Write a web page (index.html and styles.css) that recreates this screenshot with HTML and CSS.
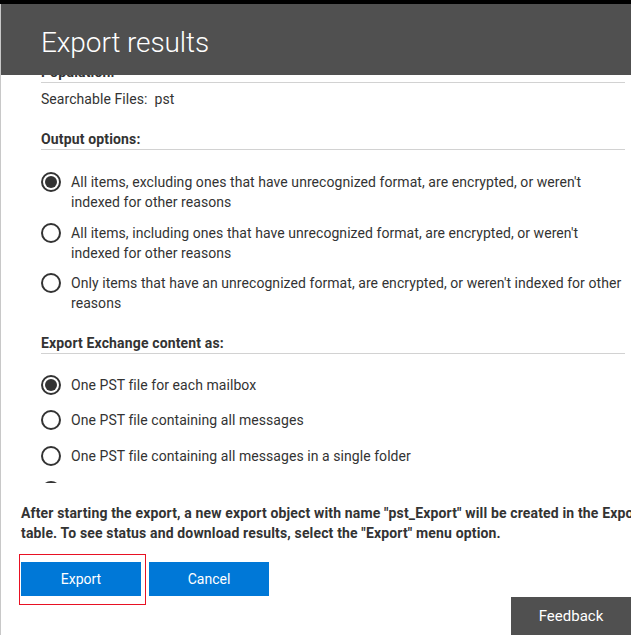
FILE: index.html
```html
<!DOCTYPE html>
<html lang="en">
<head>
<meta charset="utf-8">
<title>Export results</title>
<link rel="stylesheet" href="styles.css">
</head>
<body>
<div class="topband"></div>
<div class="dialog">
  <header class="dlg-header">
    <h1 class="dlg-title">Export results</h1>
  </header>
  <div class="dlg-body">
    <div class="scroll">
      <h2 class="sect">Population:</h2>
      <p class="info">Searchable Files:&nbsp; pst</p>

      <h2 class="sect sect-gap">Output options:</h2>
      <div class="opts opts-multi">
        <label class="opt"><span class="radio on"></span><span class="opt-text">All items, excluding ones that have unrecognized format, are encrypted, or weren't indexed for other reasons</span></label>
        <label class="opt"><span class="radio"></span><span class="opt-text">All items, including ones that have unrecognized format, are encrypted, or weren't indexed for other reasons</span></label>
        <label class="opt"><span class="radio"></span><span class="opt-text">Only items that have an unrecognized format, are encrypted, or weren't indexed for other reasons</span></label>
      </div>

      <h2 class="sect sect-gap">Export Exchange content as:</h2>
      <div class="opts opts-single">
        <label class="opt"><span class="radio on"></span><span class="opt-text">One PST file for each mailbox</span></label>
        <label class="opt"><span class="radio"></span><span class="opt-text">One PST file containing all messages</span></label>
        <label class="opt"><span class="radio"></span><span class="opt-text">One PST file containing all messages in a single folder</span></label>
        <label class="opt"><span class="radio"></span><span class="opt-text">One PST file for each message</span></label>
      </div>
    </div>
  </div>
  <footer class="dlg-footer">
    <p class="note">After starting the export, a new export object with name "pst_Export" will be created in the Export<br>table. To see status and download results, select the "Export" menu option.</p>
    <div class="actions">
      <span class="highlight"><button class="btn" type="button">Export</button></span>
      <button class="btn" type="button">Cancel</button>
    </div>
  </footer>
</div>
<button class="feedback" type="button">Feedback</button>
</body>
</html>
```
FILE: styles.css
```css
html, body {
  margin: 0;
  height: 100%;
  overflow: hidden;
  background: #ffffff;
}

body {
  font-family: Roboto, "Segoe UI", "Liberation Sans", sans-serif;
  font-size: 14px;
  letter-spacing: 0.06px;
  color: #333333;
}

.topband {
  height: 4px;
  background: #000000;
}

.dialog {
  height: 631px;
  border-left: 1px solid #c8c8c8;
  display: flex;
  flex-direction: column;
}

.dlg-header {
  flex: none;
  height: 71px;
  box-sizing: border-box;
  background: #505050;
  padding: 22px 0 0 40px;
}

.dlg-title {
  margin: 0;
  font-size: 28px;
  font-weight: 300;
  line-height: 34px;
  letter-spacing: -0.1px;
  color: #ffffff;
}

.dlg-body {
  flex: 1;
  min-height: 0;
  overflow: hidden;
}

.scroll {
  margin-top: -13px;
  padding: 0 6px 0 40px;
}

.sect {
  margin: 0;
  font-size: 14px;
  font-weight: 700;
  line-height: 20px;
  letter-spacing: 0.15px;
  color: #333333;
  border-bottom: 1px solid #d2d2d2;
}

.sect-gap {
  margin-top: 20px;
}

.info {
  margin: 6px 0 0;
  line-height: 20px;
}

.opts {
  display: flex;
  flex-direction: column;
}

.opts-multi {
  margin-top: 22px;
  gap: 10.5px;
}

.opts-single {
  margin-top: 20.5px;
  gap: 15.5px;
}

.opt {
  display: flex;
  align-items: flex-start;
  gap: 10px;
  line-height: 20px;
}

.radio {
  flex: none;
  width: 20px;
  height: 20px;
  box-sizing: border-box;
  border: 2px solid #333333;
  border-radius: 50%;
  display: flex;
  align-items: center;
  justify-content: center;
}

.radio.on::after {
  content: "";
  width: 12px;
  height: 12px;
  border-radius: 50%;
  background: #333333;
}

.opt-text {
  flex: 1;
}

.dlg-footer {
  flex: none;
  height: 152px;
  box-sizing: border-box;
  padding: 20px 0 0 20px;
  background: #ffffff;
}

.note {
  margin: 0;
  font-weight: 700;
  line-height: 20px;
  letter-spacing: 0.15px;
  white-space: nowrap;
}

.actions {
  margin-top: 19px;
  display: flex;
  gap: 8px;
}

.highlight {
  position: relative;
  display: flex;
}

.highlight::after {
  content: "";
  position: absolute;
  top: -8px;
  left: -2px;
  right: -5px;
  bottom: -9px;
  border: 1px solid #e81123;
  pointer-events: none;
}

.btn {
  width: 120px;
  height: 34px;
  border: none;
  margin: 0;
  padding: 0;
  background: #0078d7;
  color: #ffffff;
  font-family: Roboto, "Segoe UI", "Liberation Sans", sans-serif;
  font-size: 14px;
}

.feedback {
  position: fixed;
  right: 0;
  bottom: 0;
  width: 120px;
  height: 38px;
  border: none;
  margin: 0;
  padding: 0;
  background: #505050;
  color: #ffffff;
  font-family: Roboto, "Segoe UI", "Liberation Sans", sans-serif;
  font-size: 15px;
}
```
